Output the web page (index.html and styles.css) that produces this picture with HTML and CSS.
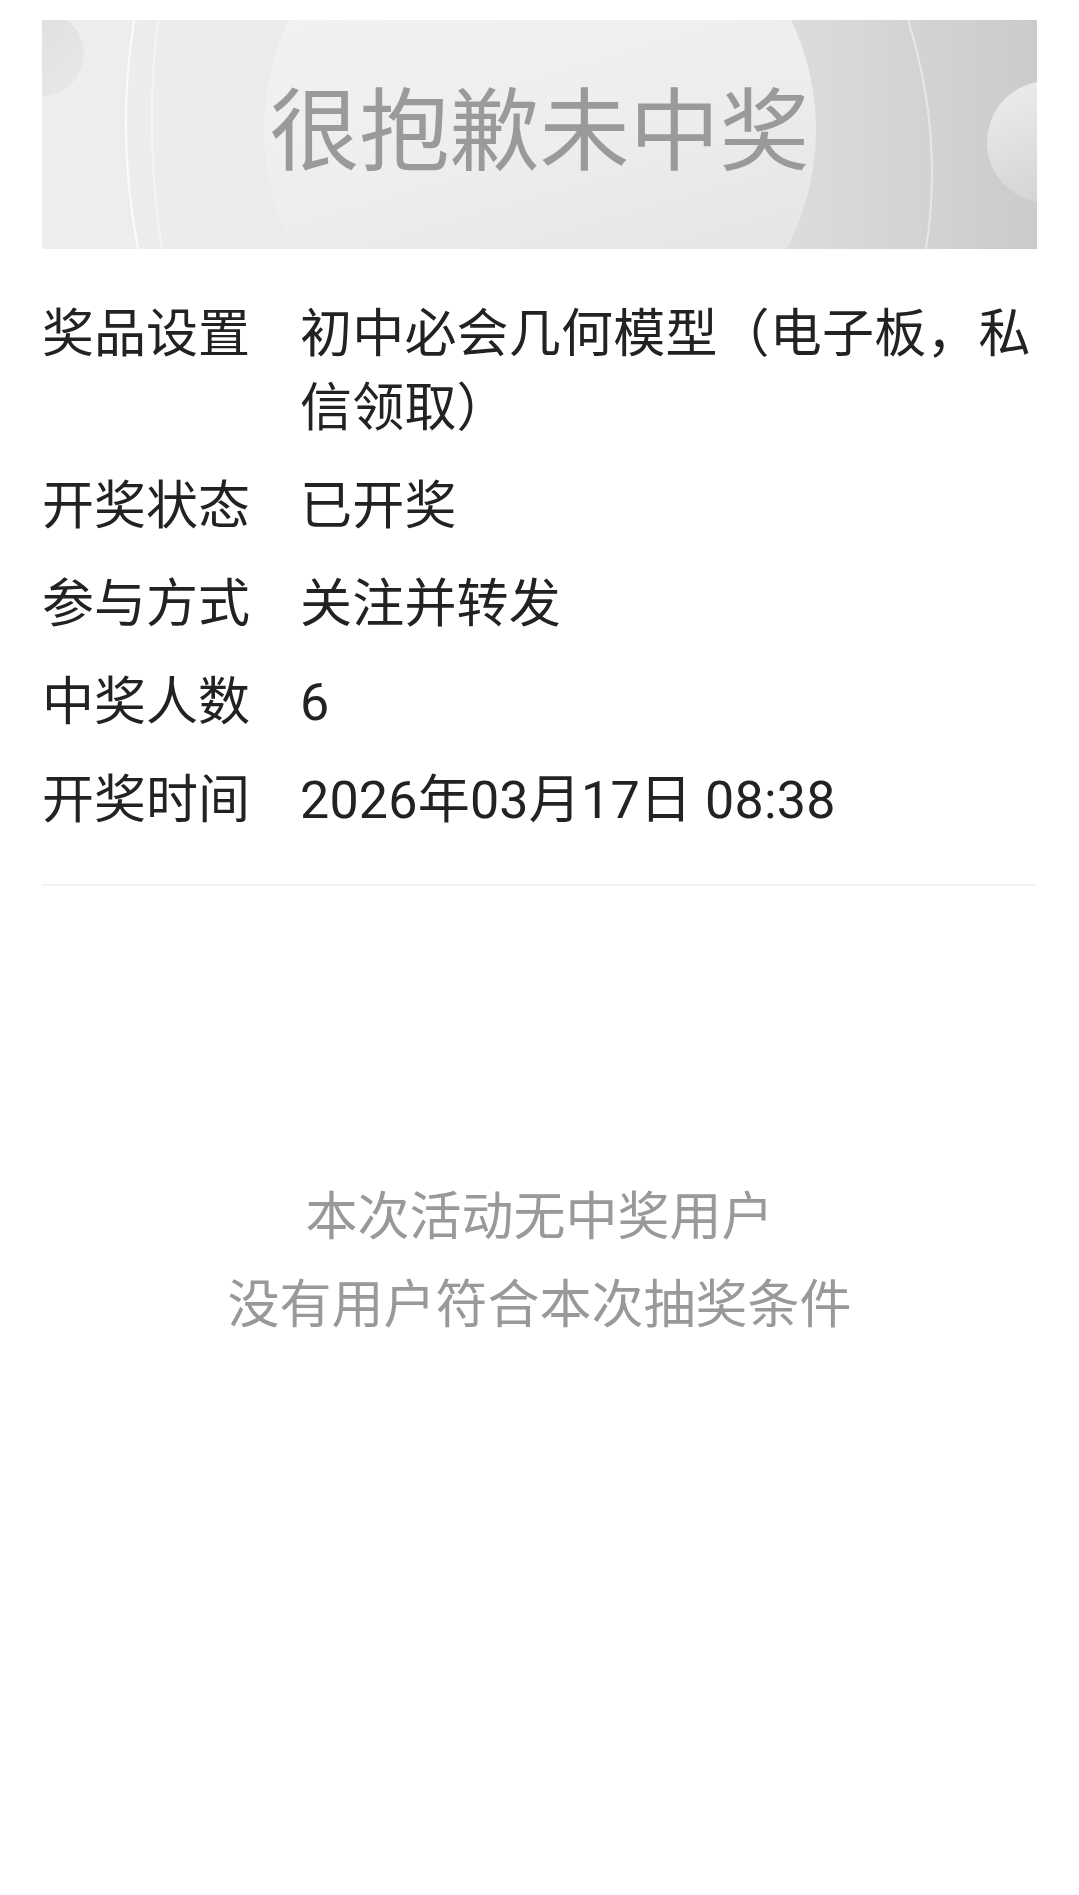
FILE: index.html
```html
<!DOCTYPE html>
<html lang="zh-CN">
<head>
<meta charset="utf-8">
<title>开奖结果</title>
<link rel="stylesheet" href="styles.css">
</head>
<body>
<div class="page">
  <div class="banner">
    <svg class="banner-bg" viewBox="0 0 995 229" preserveAspectRatio="none" aria-hidden="true">
      <defs>
        <linearGradient id="base" x1="0" y1="0" x2="1" y2="0">
          <stop offset="0" stop-color="#eeeeee"/>
          <stop offset="0.25" stop-color="#ebebeb"/>
          <stop offset="0.75" stop-color="#dcdcdc"/>
          <stop offset="1" stop-color="#cbcbcb"/>
        </linearGradient>
        <linearGradient id="big" x1="0" y1="0" x2="0.3" y2="1">
          <stop offset="0" stop-color="#f4f4f4"/>
          <stop offset="0.6" stop-color="#eeeeee"/>
          <stop offset="1" stop-color="#e3e3e3"/>
        </linearGradient>
        <linearGradient id="ball" x1="0" y1="0" x2="0.4" y2="1">
          <stop offset="0" stop-color="#eeeeee"/>
          <stop offset="1" stop-color="#d4d4d4"/>
        </linearGradient>
        <linearGradient id="tl" x1="0" y1="0" x2="1" y2="1">
          <stop offset="0" stop-color="#dddddd"/>
          <stop offset="1" stop-color="#e9e9e9"/>
        </linearGradient>
      </defs>
      <rect x="0" y="0" width="995" height="229" fill="url(#base)"/>
      <ellipse cx="498" cy="110" rx="276" ry="265" fill="url(#big)"/>
      <circle cx="0" cy="34" r="42" fill="url(#tl)"/>
      <path d="M92 0 Q74 115 96 229" stroke="#ffffff" stroke-opacity="0.8" stroke-width="2" fill="none"/>
      <path d="M116 0 Q102 115 120 229" stroke="#ffffff" stroke-opacity="0.45" stroke-width="2" fill="none"/>
      <path d="M866 0 Q902 115 884 229" stroke="#ffffff" stroke-opacity="0.45" stroke-width="2" fill="none"/>
      <circle cx="1006" cy="122" r="61" fill="url(#ball)"/>
    </svg>
    <h1 class="banner-title">很抱歉未中奖</h1>
  </div>

  <div class="info">
    <div class="row">
      <div class="label">奖品设置</div>
      <div class="value">初中必会几何模型（电子板，私信领取）</div>
    </div>
    <div class="row">
      <div class="label">开奖状态</div>
      <div class="value">已开奖</div>
    </div>
    <div class="row">
      <div class="label">参与方式</div>
      <div class="value">关注并转发</div>
    </div>
    <div class="row">
      <div class="label">中奖人数</div>
      <div class="value">6</div>
    </div>
    <div class="row">
      <div class="label">开奖时间</div>
      <div class="value">2026年03月17日 08:38</div>
    </div>
  </div>

  <div class="divider"></div>

  <div class="empty">
    <p class="empty-line">本次活动无中奖用户</p>
    <p class="empty-line">没有用户符合本次抽奖条件</p>
  </div>
</div>
</body>
</html>
```

FILE: styles.css
```css
html, body {
  margin: 0;
  padding: 0;
  background: #ffffff;
}

body {
  font-family: Roboto, "Noto Sans CJK SC", "Noto Sans", sans-serif;
  color: #222222;
}

.page {
  padding: 20px 42px 0;
}

.banner {
  position: relative;
  height: 229px;
  overflow: hidden;
  display: flex;
  align-items: center;
  justify-content: center;
}

.banner-bg {
  position: absolute;
  left: 0;
  top: 0;
  width: 100%;
  height: 100%;
  display: block;
}

.banner-title {
  position: relative;
  margin: 0 0 4px;
  font-size: 90px;
  line-height: 1;
  font-weight: 400;
  color: #9a9a9a;
  letter-spacing: 0;
}

.info {
  margin-top: 49px;
  display: flex;
  flex-direction: column;
  gap: 24px;
}

.row {
  display: flex;
  align-items: flex-start;
  font-size: 52px;
  line-height: 74px;
}

.label {
  flex: 0 0 208px;
  margin-right: 50px;
  white-space: nowrap;
}

.value {
  flex: 1 1 auto;
  min-width: 0;
  letter-spacing: 0.2px;
}

.divider {
  margin-top: 46px;
  height: 2px;
  background: #f3f3f3;
}

.empty {
  margin-top: 288px;
  text-align: center;
  color: #999999;
  font-size: 52px;
  line-height: 88px;
}

.empty-line {
  margin: 0;
}
```
